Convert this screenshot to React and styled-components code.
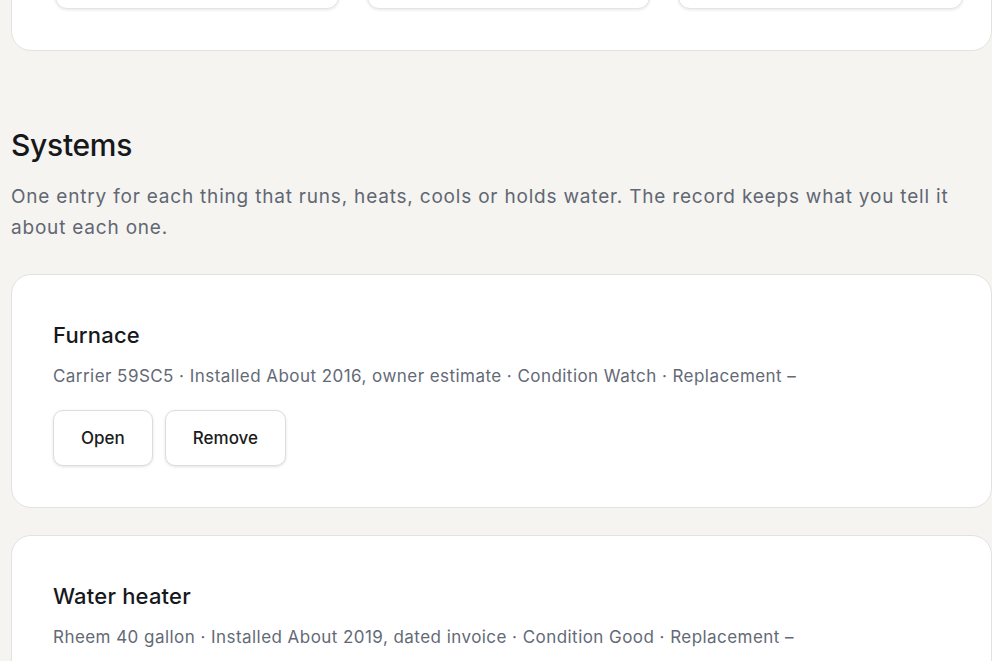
import React from 'react';
import styled, { createGlobalStyle } from 'styled-components';

const Global = createGlobalStyle`
  html, body {
    margin: 0;
    padding: 0;
    background: #f5f4f0;
    overflow: hidden;
  }
  body {
    font-family: Inter, "Noto Sans", "Liberation Sans", sans-serif;
    color: #1b1c20;
  }
`;

const Page = styled.div`
  width: 981px;
  padding-left: 11px;
  margin-top: -201px;
  display: flex;
  flex-direction: column;
`;

const Panel = styled.section`
  box-sizing: border-box;
  background: #fff;
  border: 1px solid #e2e2e0;
  border-radius: 20px;
  padding: ${p => p.$pad || '41px'};
  margin-bottom: 27px;
`;

const Tiles = styled.div`
  display: grid;
  grid-template-columns: 284px 283px 285px;
  column-gap: 28px;
`;

const Tile = styled.div`
  min-height: 166px;
  background: #fff;
  border: 1px solid #e3e4e8;
  border-radius: 12px;
  box-shadow: 0 1px 3px rgba(20, 24, 40, 0.1);
`;

const Heading = styled.h2`
  margin: 49px 0 0;
  font-size: 30px;
  line-height: 36px;
  font-weight: 500;
  letter-spacing: -0.01em;
  color: #17181c;
`;

const Lead = styled.p`
  margin: 18px 0 31px;
  max-width: 970px;
  font-size: 19px;
  line-height: 31px;
  letter-spacing: 0.8px;
  color: #616773;
`;

const Title = styled.h3`
  margin: 0;
  font-size: 22px;
  line-height: 38px;
  font-weight: 500;
  letter-spacing: 0.2px;
  color: #17181c;
`;

const Meta = styled.div`
  margin-top: 9px;
  font-size: 17px;
  line-height: 26px;
  letter-spacing: 0.45px;
  color: #636a76;
`;

const Actions = styled.div`
  display: flex;
  gap: 12px;
  margin-top: 21px;
`;

const Button = styled.button`
  height: 56px;
  padding: 0 27px;
  background: #fff;
  border: 1px solid #dcdde1;
  border-radius: 10px;
  box-shadow: 0 1px 3px rgba(20, 24, 40, 0.12);
  font-family: inherit;
  font-size: 17px;
  font-weight: 500;
  color: #1b1c20;
  cursor: pointer;
`;

const systems = [
  {
    name: 'Furnace',
    meta: 'Carrier 59SC5 · Installed About 2016, owner estimate · Condition Watch · Replacement –',
  },
  {
    name: 'Water heater',
    meta: 'Rheem 40 gallon · Installed About 2019, dated invoice · Condition Good · Replacement –',
  },
];

const App = () => {
  return (
    <>
      <Global />
      <Page>
        <Panel $pad="41px 43px 41px">
          <Tiles>
            <Tile />
            <Tile />
            <Tile />
          </Tiles>
        </Panel>

        <Heading>Systems</Heading>
        <Lead>
          One entry for each thing that runs, heats, cools or holds water. The record keeps what you tell it
          about each one.
        </Lead>

        {systems.map(s => (
          <Panel key={s.name}>
            <Title>{s.name}</Title>
            <Meta>{s.meta}</Meta>
            <Actions>
              <Button>Open</Button>
              <Button>Remove</Button>
            </Actions>
          </Panel>
        ))}
      </Page>
    </>
  );
};

export default App;
